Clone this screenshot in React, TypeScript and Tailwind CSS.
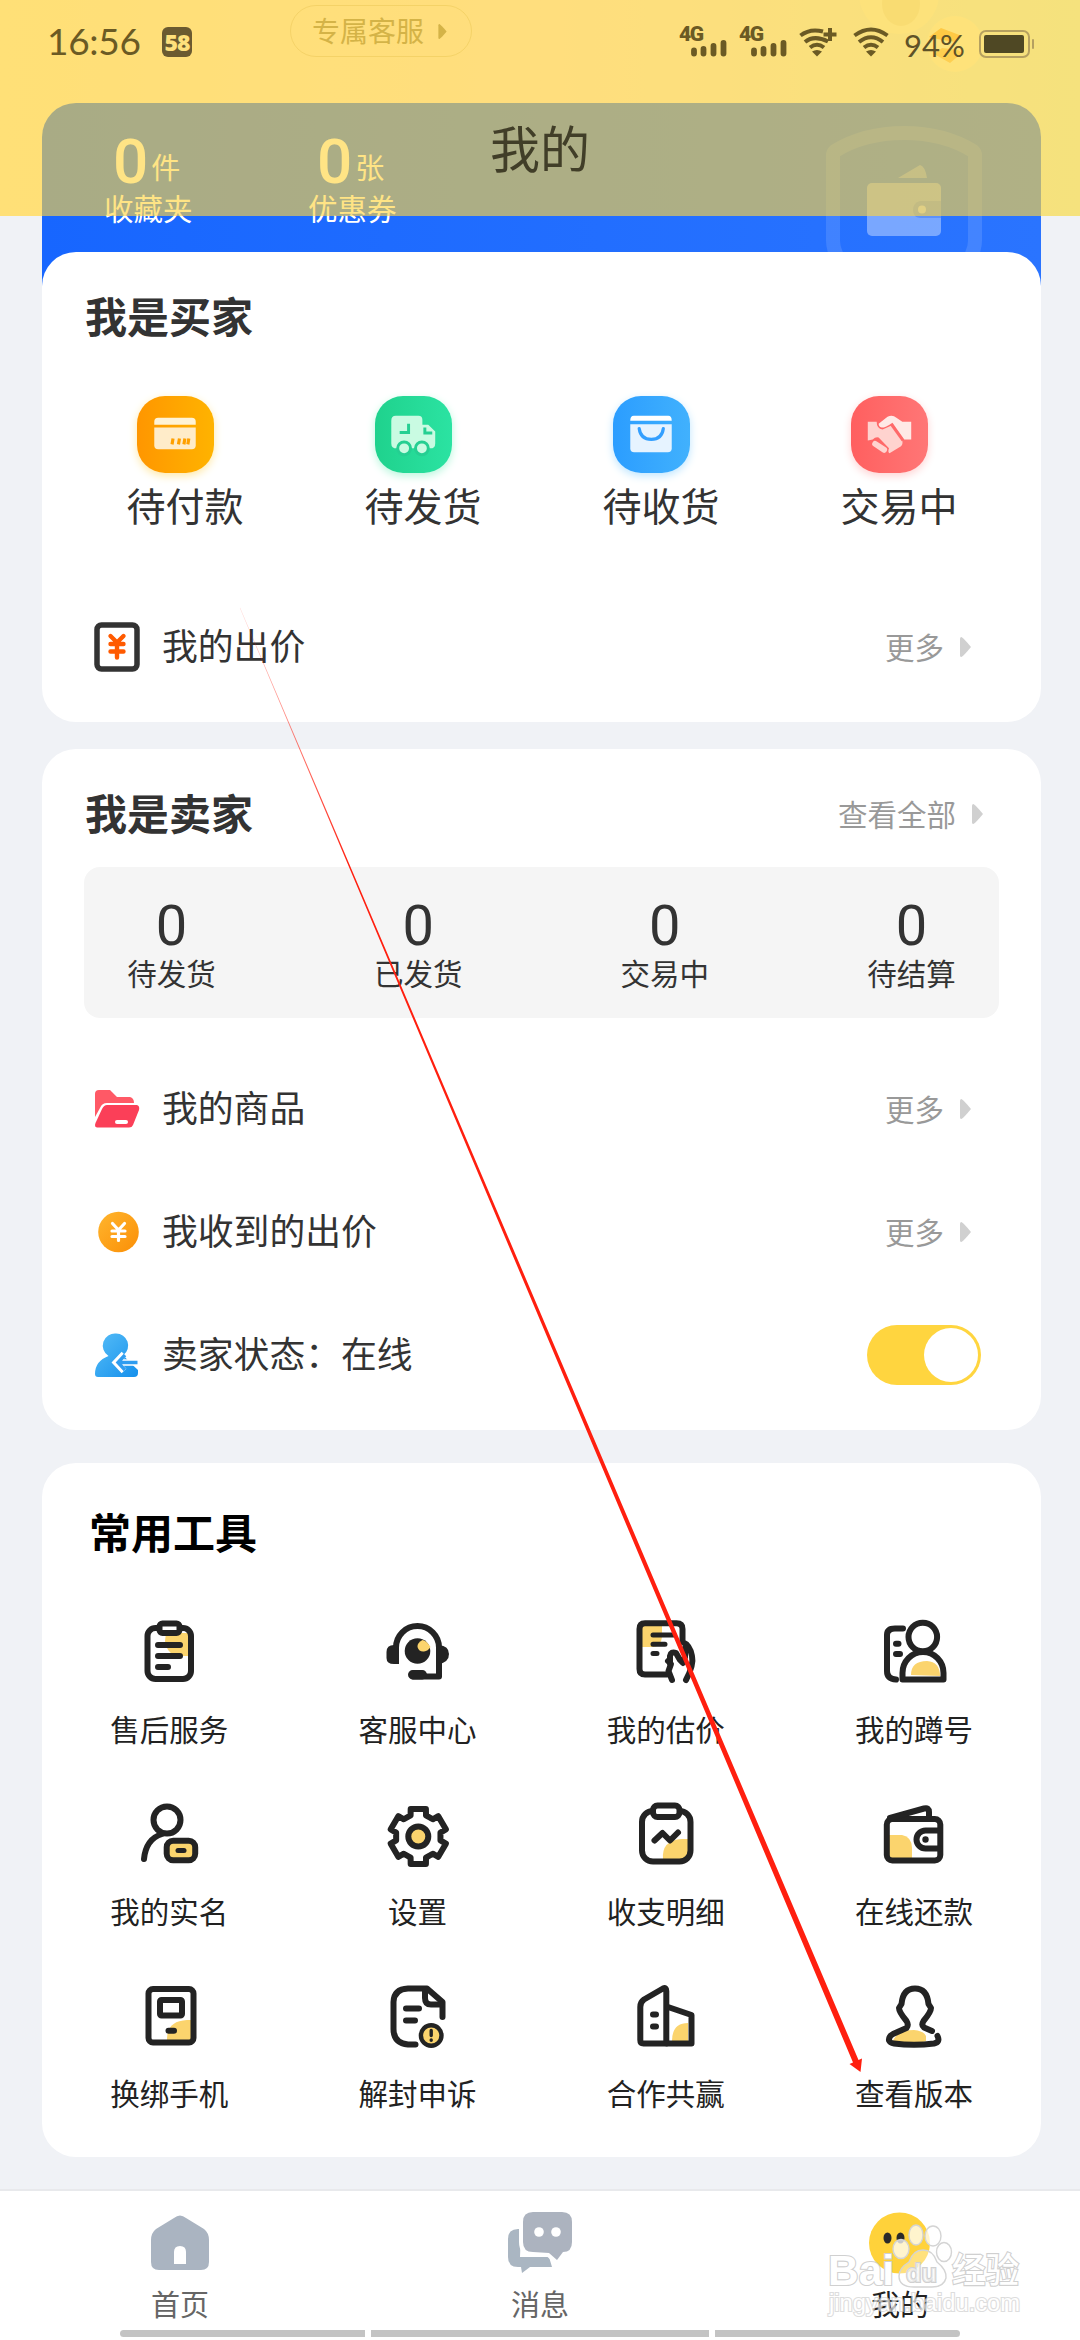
import type { ReactNode } from "react";

const INK = "#232323";
const SUN = "#fbd46d";

function Triangle({ className }: { className: string }) {
  return (
    <svg className={className} viewBox="0 0 11 20">
      <path d="M1.5 0Q0 0 0 1.5V18.500Q0 20 1.500 20Q4 18.500 11 10Q4 1.500 1.500 0Z" fill="currentColor" />
    </svg>
  );
}

/* ---------- tool icons, drawn in a 72 x 72 box ---------- */

function ToolIcon({ children }: { children: ReactNode }) {
  return (
    <svg className="h-[72px] w-[72px]" viewBox="0 0 72 72" fill="none" stroke={INK} strokeWidth="6" strokeLinecap="round" strokeLinejoin="round">
      {children}
    </svg>
  );
}

const gearPoints = Array.from({ length: 6 }, (_, i) =>
  [
    [-20, 22.5],
    [-15.5, 28.5],
    [15.5, 28.5],
    [20, 22.5],
  ]
    .map(([a, r]) => {
      const t = ((i * 60 + a - 90) * Math.PI) / 180;
      return `${(37.3 + r * Math.cos(t)).toFixed(2)},${(39.5 + r * Math.sin(t)).toFixed(2)}`;
    })
    .join(" "),
).join(" ");

const tools: { label: string; icon: ReactNode }[] = [
  {
    label: "售后服务",
    icon: (
      <>
        <path d="M33 18H58V41H42Q33 36 32 26Z" fill={SUN} stroke="none" />
        <rect x="14.500" y="13" width="43.500" height="51" rx="8" />
        <rect x="26.500" y="8.500" width="20" height="9.500" rx="3" fill="#fff" />
        <path d="M25 30H47M25 41H47M25 52H35" />
      </>
    ),
  },
  {
    label: "客服中心",
    icon: (
      <>
        <path d="M15 34V32.500A21.500 21.500 0 0 1 58 32.500V61.500H32" />
        <path d="M18 29V49H13Q5.500 49 5.500 43V37Q5.500 30 13 30Z" fill={INK} stroke="none" />
        <path d="M58 30Q68 31 68 39Q68 47 58 49Z" fill={INK} stroke="none" />
        <rect x="27" y="55" width="19" height="9.500" rx="4.700" fill={INK} stroke="none" />
        <circle cx="36.500" cy="36" r="12.800" fill={INK} stroke="none" />
        <path d="M41.500 25Q36 28 36.500 32Q38 37 43 36.500Q47 36 49.500 32Q46 26 41.500 25Z" fill={SUN} stroke="none" />
      </>
    ),
  },
  {
    label: "我的估价",
    icon: (
      <>
        <path d="M12 10H32V22Q31 32 22 32H12Z" fill={SUN} stroke="none" />
        <path d="M37 59.500H15Q9.500 59.500 9.500 54V14Q9.500 8.300 15 8.300H46.500Q52.500 8.300 52.500 14V27Q60 30 62 41Q64 50 56 65" />
        <path d="M23 20H44M23 29.200H35M23 38.500H27" strokeWidth="5" />
        <path d="M42 65L38.500 56L41 49L38 46M40 49V41Q41 36 46 38L50 45L53 48L55 42V33" />
      </>
    ),
  },
  {
    label: "我的蹲号",
    icon: (
      <>
        <path d="M33 60Q33 46 49 46Q62 47 62 61Z" fill={SUN} stroke="none" />
        <path d="M25 13.500H17Q9 13.500 9 20V56Q9 64 18 64.500" />
        <circle cx="44.800" cy="22" r="14.300" />
        <path d="M24.500 64.500V58A20.500 21 0 0 1 65.500 58V64.500Z" />
        <path d="M18 28.800H20.500M18 39H22" strokeWidth="6" />
      </>
    ),
  },
  {
    label: "我的实名",
    icon: (
      <>
        <circle cx="34" cy="23" r="13.500" />
        <path d="M11 62Q13 42 29 37" strokeWidth="6" />
        <rect x="33.700" y="43.700" width="28.500" height="19.500" rx="6.500" fill={SUN} />
        <path d="M45 53.500H51" strokeWidth="5" />
      </>
    ),
  },
  {
    label: "设置",
    icon: (
      <>
        <polygon points={gearPoints} />
        <circle cx="37.300" cy="39.500" r="10" fill={SUN} />
      </>
    ),
  },
  {
    label: "收支明细",
    icon: (
      <>
        <path d="M33 63Q31 43 52 42H58V63Z" fill={SUN} stroke="none" />
        <rect x="12" y="14" width="48.500" height="50.500" rx="11" />
        <rect x="23" y="8.500" width="26.500" height="11.500" rx="4.500" fill="#fff" />
        <path d="M24.500 43.500L32.500 36L40 43.500L48 35.500" />
      </>
    ),
  },
  {
    label: "在线还款",
    icon: (
      <>
        <path d="M10 38H24Q34 40 34 51V63H10Z" fill={SUN} stroke="none" />
        <rect x="8.800" y="22" width="53.500" height="41.500" rx="5.500" />
        <path d="M12 21L46 11.500Q51 10 51 15V20" />
        <path d="M62 33.500H47.500A9 9 0 0 0 47.500 51.500H62" />
        <circle cx="47.500" cy="42.500" r="3.200" fill={INK} stroke="none" />
      </>
    ),
  },
  {
    label: "换绑手机",
    icon: (
      <>
        <path d="M34 60Q34 42 54 41H60V62H34Z" fill={SUN} stroke="none" />
        <rect x="15.500" y="10" width="45" height="53.500" rx="4.500" />
        <rect x="27" y="21" width="22" height="15.500" rx="1.500" />
        <path d="M35.500 51.800H41" />
      </>
    ),
  },
  {
    label: "解封申诉",
    icon: (
      <>
        <path d="M34.500 65.500H27Q12.500 64 12.500 50V23Q13 10 27 9.500H46L61.500 23V38" />
        <path d="M44 11V19Q44 25.500 50 25.500H60" />
        <path d="M25 29.500H38M25 41.500H34" />
        <circle cx="50.200" cy="56.500" r="10.300" fill={SUN} strokeWidth="4.400" />
        <path d="M50.200 51.500V56.500M50.200 61V61.200" strokeWidth="3.400" />
      </>
    ),
  },
  {
    label: "合作共赢",
    icon: (
      <>
        <path d="M42 62Q42 44 58 44V62Z" fill={SUN} stroke="none" />
        <path d="M10.300 61V28Q10.300 23 14 20.500L33 9.500Q36.300 8 36.300 12V64.500H13.500Q10.300 64.500 10.300 61Z" />
        <path d="M38 28L61.500 36V64.500H37" />
        <path d="M23 35.500H26M23 47.500H26" strokeWidth="6" />
      </>
    ),
  },
  {
    label: "查看版本",
    icon: (
      <>
        <path d="M14 64Q18 51 36 51Q46 52 48 57V62Q34 68 14 64Z" fill={SUN} stroke="none" />
        <path d="M54 52L46 48.500Q43 46 45.500 42Q53 33 53 29L50.500 25Q49 9.500 37 9.500Q25 9.500 23.500 25L21 29Q21 33 28.500 42Q31 46 28.500 49L15 55Q10.500 57.500 11 61.500Q12 64 16 64.500Q36 67 56 64.500Q62.500 63 59.500 57" />
      </>
    ),
  },
];

/* ---------- order status icons, 78 x 78 ---------- */

const orderSteps: { label: string; tile: string; icon: ReactNode }[] = [
  {
    label: "待付款",
    tile: "bg-linear-to-r from-[#ff9600] to-[#ffb300] shadow-[0_3px_8px_#ffe9a8]",
    icon: (
      <>
        <path d="M21.500 22H55.500Q59.500 22 59.500 26V29H17.500V26Q17.500 22 21.500 22Z" fill="#fff3d6" />
        <path d="M17.500 32H59.500V50Q59.500 54 55.500 54H21.500Q17.500 54 17.500 50Z" fill="#ffecc9" />
        <path d="M36.500 43L35.500 49M43 43L42 49M48.500 43L47.500 49M52.500 43L51.500 49" stroke="#ffa000" strokeWidth="3.200" />
      </>
    ),
  },
  {
    label: "待发货",
    tile: "bg-linear-to-r from-[#1fd28d] to-[#2be3a2] shadow-[0_3px_8px_#b9f7dd]",
    icon: (
      <>
        <path d="M21 20H44Q48 20 48 24V29H54L61 36V48Q61 53 56 53H22Q16.500 53 16.500 48V25Q16.500 20 21 20Z" fill="#c9fbe2" />
        <path d="M34 28V37H25M50.500 32V37.500H58" stroke="#25cf92" strokeWidth="3" fill="none" />
        <circle cx="29.500" cy="53" r="6.500" fill="#c9fbe2" stroke="#25cf92" strokeWidth="3" />
        <circle cx="47.500" cy="53" r="6.500" fill="#c9fbe2" stroke="#25cf92" strokeWidth="3" />
      </>
    ),
  },
  {
    label: "待收货",
    tile: "bg-linear-to-r from-[#2b9dff] to-[#41b1fd] shadow-[0_3px_8px_#bfe6ff]",
    icon: (
      <>
        <path d="M21 20H56Q59.500 20 59.500 25H17.500Q17.500 20 21 20Z" fill="#fff" />
        <path d="M17.500 28.500H59.500V53Q59.500 57 55.500 57H21.500Q17.500 57 17.500 53Z" fill="#e6f3ff" />
        <path d="M26.500 33Q28 44 38.800 44Q49.500 44 51 33" stroke="#339fff" strokeWidth="3.200" fill="none" strokeLinecap="round" />
      </>
    ),
  },
  {
    label: "交易中",
    tile: "bg-linear-to-r from-[#ff5f5f] to-[#ff7676] shadow-[0_3px_8px_#ffd3d3]",
    icon: (
      <>
        <path d="M17 26H26Q26 33 32 34L41 30L52 45Q53 50 49 52L39 58Q37 57 38.500 53L28 42Q25 41 22 44L17 45Z" fill="#ffd3cf" />
        <path d="M28 28L37 21Q42 18.500 46 22L52 26H61V44H54L42 27Q35 32 31 32Q28 31 28 28Z" fill="#ffe9e6" />
        <path d="M41 29L52.500 45" stroke="#ff6a6a" strokeWidth="2.600" />
        <path d="M24.500 48.500L33.500 54.500" stroke="#ffd3cf" strokeWidth="6" strokeLinecap="round" />
      </>
    ),
  },
];

const sellerCounts = ["待发货", "已发货", "交易中", "待结算"];

function BidIcon() {
  return (
    <svg className="h-[50px] w-[46px]" viewBox="0 0 46 50" fill="none" strokeLinecap="round">
      <rect x="3" y="3" width="40" height="44" rx="4.500" stroke="#333" strokeWidth="5.500" />
      <path d="M16.500 14L23 20.500L29.500 14M16.500 22H29.500M16.500 29.500H29.500M23 21V35.500" stroke="#ff5a00" strokeWidth="4.400" />
    </svg>
  );
}

function FolderIcon() {
  return (
    <svg className="h-[50px] w-[46px]" viewBox="0 0 46 50">
      <path d="M5 6H16L23 13H36Q40 14 40 19H13Q8 19 6 24L1 33V10Q1 6 5 6Z" fill="#ff5966" />
      <path d="M13 21H43Q46 22 45 26L39 41Q38 43.500 35 43.500H3Q0 43 1.500 39L8 25Q10 21 13 21Z" fill="#fb3f58" />
      <path d="M23 38H32" stroke="#fff" strokeWidth="4" strokeLinecap="round" />
    </svg>
  );
}

function CoinIcon() {
  return (
    <svg className="h-[50px] w-[46px]" viewBox="0 0 46 50">
      <defs>
        <linearGradient id="coin" x1="0" y1="0" x2="1" y2="1">
          <stop offset="0" stopColor="#ffb52e" />
          <stop offset="1" stopColor="#fb8f06" />
        </linearGradient>
      </defs>
      <circle cx="24.500" cy="25" r="20.300" fill="url(#coin)" />
      <path d="M18.500 16.500L24.500 23L30.500 16.500M18 24H31M18 29.500H31M24.500 23V33.500" stroke="#fff" strokeWidth="3.200" strokeLinecap="round" fill="none" />
    </svg>
  );
}

function SellerIcon() {
  return (
    <svg className="h-[50px] w-[46px]" viewBox="0 0 46 50">
      <defs>
        <linearGradient id="seller" x1="0" y1="0" x2="1" y2="1">
          <stop offset="0" stopColor="#56bdf7" />
          <stop offset="1" stopColor="#1590ec" />
        </linearGradient>
      </defs>
      <path d="M22 3.500A12 12 0 0 1 29.500 25Q31 28 44 40V43Q44 47 40 47H4Q1 47 1 44Q1 31 14.500 26A12.200 12.200 0 0 1 22 3.500Z" fill="url(#seller)" />
      <path d="M30 24L22 32.500L30 41M23 32.500H46" stroke="#fff" strokeWidth="6.500" fill="none" />
      <path d="M31 25L24 32.500L31 40M25 32.500H43.500" stroke="#2f9df0" strokeWidth="3.400" fill="none" />
    </svg>
  );
}

function More({ label = "更多" }: { label?: string }) {
  return (
    <span className="flex items-center text-[29.500px] leading-[40px] text-[#999]">
      <span className="relative -top-px">{label}</span>
      <Triangle className="ml-4 h-5 w-[11px] text-[#d0d0d0]" />
    </span>
  );
}

function MenuRow({ icon, label, children }: { icon: ReactNode; label: string; children: ReactNode }) {
  return (
    <div className="flex h-[123px] items-center pl-[52px]">
      {icon}
      <span className="relative -top-[3px] ml-[22px] text-[35.800px] leading-[50px] text-[#333]">{label}</span>
      <div className="ml-auto">{children}</div>
    </div>
  );
}

/* ---------- status bar pieces ---------- */

function Signal({ className }: { className: string }) {
  return (
    <div className={`relative h-8 w-[48px] text-[#6b5a24] ${className}`}>
      <span className="block font-['Roboto',sans-serif] text-[21px] leading-[18px] font-black tracking-[-1.500px]">4G</span>
      <svg className="absolute top-0 left-0 h-8 w-[48px]" viewBox="0 0 48 32" stroke="currentColor" strokeWidth="5.800" strokeLinecap="round">
        <path d="M15 25.500V28.500M24.500 24V28.500M34.500 21V28.500M44.500 18V28.500" />
      </svg>
    </div>
  );
}

function Wifi({ plus, className }: { plus?: boolean; className: string }) {
  return (
    <svg className={`h-[30px] w-[38px] text-[#6b5a24] ${className}`} viewBox="0 0 38 30" fill="none" stroke="currentColor" strokeWidth="4">
      <path d={plus ? "M1.500 8.500Q11 1 24 4.500" : "M1.500 8.500Q18 -3.500 34.500 8.500"} />
      <path d={plus ? "M6 15Q15 7.500 29 14.500" : "M6 15Q18 5.500 30 15"} />
      <path d="M11 20.500Q18 15 25 20.500" />
      <path d="M13 24.500Q18 21.500 23 24.500L18 29.500Z" fill="currentColor" stroke="none" />
      {plus && <path d="M24.500 7.500H37.500M31 1V14" />}
    </svg>
  );
}

function StatusBar() {
  return (
    <div className="flex h-[57px] items-end pl-[47px] text-[#6b5a24]">
      <span className="w-[95px] translate-y-[3px] font-['Lato',sans-serif] text-[37px] leading-[38px] tracking-[-0.300px]">16:56</span>
      <span className="ml-5 flex h-[30px] w-[30px] items-center justify-center rounded-md bg-[#6b5a30] font-['Open_Sans',sans-serif] text-[23px] leading-none font-extrabold tracking-[-1px] text-[#ffe07c]">
        58
      </span>
      <Signal className="ml-[487px]" />
      <Signal className="ml-3" />
      <Wifi plus className="ml-3" />
      <Wifi className="ml-4" />
      <span className="ml-[13px] w-[64px] translate-y-[3px] font-['Lato',sans-serif] text-[31px] leading-[30px] text-[#5e5228]">94%</span>
      <span className="ml-[11px] flex h-[28px] w-[51px] translate-y-px items-center rounded-[7px] border-2 border-[#b5a060] px-[3px]">
        <span className="h-[18px] w-[40px] rounded-[2px] bg-[#4f4824]" />
      </span>
      <span className="mb-2 ml-0.5 h-2.5 w-[2px] rounded-full bg-[#b5a060]" />
    </div>
  );
}

function WalletStat({ unit, label }: { unit: string; label: string }) {
  return (
    <div className="flex w-[204px] flex-col text-white">
      <div className="flex h-[52px] items-end pl-[9px]">
        <span className="relative top-[6px] font-['Roboto',sans-serif] text-[62px] leading-[58px] font-medium">0</span>
        <span className="relative top-[2px] ml-[3px] text-[29px] leading-[42px]">{unit}</span>
      </div>
      <span className="text-[29.500px] leading-[44px]">{label}</span>
    </div>
  );
}

function ShieldWallet() {
  return (
    <svg className="h-[149px] w-[160px]" viewBox="0 0 160 149" fill="none">
      <path d="M14 155Q9 146 9 138V52Q9 50 11 48Q40 30 80 30Q120 30 149 48Q151 50 151 52V138Q151 146 146 155" stroke="#fff" strokeOpacity="0.120" strokeWidth="14" />
      <path d="M74 75L96 62Q101 63 103 75Z" fill="#fff" fillOpacity="0.300" />
      <rect x="43" y="80" width="74" height="53" rx="5" fill="#fff" fillOpacity="0.380" />
      <path d="M117 98H96Q89 100 89 107Q89 114 96 115H117Z" fill="#3f7cf5" fillOpacity="0.500" />
      <circle cx="98" cy="106.500" r="4" fill="#fff" fillOpacity="0.500" />
    </svg>
  );
}

function NavItem({ icon, label, color }: { icon: ReactNode; label: string; color: string }) {
  return (
    <div className="flex w-[360px] flex-col items-center pt-[19px]">
      {icon}
      <span className={`mt-[5px] text-[29px] leading-[40px] ${color}`}>{label}</span>
    </div>
  );
}

function Watermark() {
  return (
    <div className="absolute top-[2218px] left-[826px] h-[104px] w-[200px]">
      <svg className="h-[104px] w-[200px] overflow-visible" viewBox="0 0 200 104">
        <g fill="#fff" fillOpacity="0.750" stroke="#d4d4d4" strokeWidth="1.400">
          <ellipse cx="90" cy="17" rx="7" ry="10" />
          <ellipse cx="107" cy="18" rx="8" ry="10" />
          <ellipse cx="75" cy="31" rx="8" ry="9.500" />
          <ellipse cx="118" cy="34" rx="7.500" ry="9.500" />
          <path d="M97 32Q107 32 111 44Q121 52 120 60Q118 69 106 69H88Q73 69 73 58Q73 50 83 44Q87 32 97 32Z" fillOpacity="0.350" />
        </g>
        <g stroke="#d0d0d0" strokeWidth="2.200" fill="#fff" paintOrder="stroke" style={{ fontFamily: "'Liberation Sans','Noto Sans CJK SC',sans-serif" }}>
          <text x="2" y="67" fontSize="43" fontWeight="700" textLength="66" lengthAdjust="spacingAndGlyphs">Bai</text>
          <text x="80" y="64" fontSize="26" fontWeight="700" textLength="31" lengthAdjust="spacingAndGlyphs" fillOpacity="0.500">du</text>
          <text x="126" y="65" fontSize="35" fontWeight="500" textLength="67" lengthAdjust="spacingAndGlyphs">经验</text>
          <text x="3" y="93" fontSize="23" textLength="191" lengthAdjust="spacingAndGlyphs" opacity="0.700">jingyan.baidu.com</text>
        </g>
      </svg>
    </div>
  );
}

export default function App() {
  return (
    <div className="relative flex h-[2340px] w-[1080px] flex-col overflow-hidden bg-[#f0f2f6] font-['Noto_Sans_CJK_SC',sans-serif]">
      <div className="h-[252px] shrink-0 bg-linear-to-r from-[#fff3d8] via-[#ffeeea] via-50% to-[#e4f8ea] bg-[length:100%_216px] bg-no-repeat">
        <div className="relative flex h-[103px] justify-start pt-[5px] pl-[290px]">
          <div className="flex h-[52px] w-[182px] items-center rounded-full border border-[#e2cfae] pl-[21px] text-[28px] leading-[40px] text-[#8a7a58]">
            <span className="relative -top-px">专属客服</span>
            <Triangle className="ml-[14px] h-[15px] w-[9px]" />
          </div>
          <svg className="absolute top-0 right-[90px] h-[80px] w-[140px]" viewBox="0 0 140 80" fill="none">
            <circle cx="49" cy="-6" r="40" fill="#fffbe0" fillOpacity="0.700" />
            <ellipse cx="51" cy="4" rx="19" ry="22" fill="#efe9cc" />
            <circle cx="105" cy="44" r="28" fill="#fffbe0" fillOpacity="0.800" />
            <path d="M79 37L91 28L112 36L106 42L92 40Z" fill="#ff9000" fillOpacity="0.650" />
            <path d="M112 53L100 63L84 54L92 48L108 50Z" fill="#ff9000" fillOpacity="0.500" />
          </svg>
        </div>
        <div className="flex h-[189px] px-[42px]">
          <div className="flex h-[189px] w-[999px] shrink-0 rounded-t-[34px] bg-linear-to-r from-[#1766ff] to-[#2a74ff]">
            <div className="flex pt-[30px] pl-[62px]">
              <WalletStat unit="件" label="收藏夹" />
              <WalletStat unit="张" label="优惠券" />
            </div>
            <div className="ml-auto pr-[57px]">
              <ShieldWallet />
            </div>
          </div>
        </div>
      </div>

      <div className="relative flex h-[1937px] shrink-0 flex-col pl-[42px]">
        {/* buyer */}
        <section className="flex h-[470px] w-[999px] flex-col rounded-[34px] bg-white">
          <h2 className="h-[144px] shrink-0 pt-[34px] pl-[43px] text-[42px] leading-[58px] font-bold text-[#333]">我是买家</h2>
          <div className="flex pl-[24px]">
            {orderSteps.map((s) => (
              <div key={s.label} className="flex w-[238px] flex-col items-center">
                <div className={`mr-[19px] h-[77px] w-[77px] rounded-[28px] ${s.tile}`}>
                  <svg className="h-[77px] w-[77px]" viewBox="0 0 78 78">
                    {s.icon}
                  </svg>
                </div>
                <span className="mt-[4px] text-[39px] leading-[54px] text-[#333]">{s.label}</span>
              </div>
            ))}
          </div>
          <div className="mt-[54px] pr-[70px]">
            <MenuRow icon={<BidIcon />} label="我的出价">
              <More />
            </MenuRow>
          </div>
        </section>

        {/* seller */}
        <section className="mt-[27px] flex h-[681px] w-[999px] flex-col rounded-[34px] bg-white">
          <div className="flex h-[118px] items-center justify-between pt-[7px] pr-[58px] pl-[43px]">
            <h2 className="text-[42px] leading-[58px] font-bold text-[#333]">我是卖家</h2>
            <div className="pt-1">
              <More label="查看全部" />
            </div>
          </div>
          <div className="mx-[42px] flex h-[151px] justify-between rounded-2xl bg-[#f5f5f5] px-[43px] pt-[29px]">
            {sellerCounts.map((c) => (
              <div key={c} className="flex w-[89px] flex-col items-center text-[#333]">
                <span className="font-['Roboto',sans-serif] text-[56px] leading-[60px]">0</span>
                <span className="-mt-0.5 text-[29.500px] leading-[36px]">{c}</span>
              </div>
            ))}
          </div>
          <div className="mt-[29px] pr-[70px]">
            <MenuRow icon={<FolderIcon />} label="我的商品">
              <More />
            </MenuRow>
            <MenuRow icon={<CoinIcon />} label="我收到的出价">
              <More />
            </MenuRow>
            <MenuRow icon={<SellerIcon />} label="卖家状态：在线">
              <div className="-mr-[10px] flex h-[60px] w-[114px] items-center justify-end rounded-full bg-[#ffd53f] pr-[3px]">
                <div className="h-[54px] w-[54px] rounded-full bg-white" />
              </div>
            </MenuRow>
          </div>
        </section>

        {/* tools */}
        <section className="mt-[33px] flex h-[694px] w-[999px] flex-col rounded-[34px] bg-white">
          <h2 className="h-[152px] shrink-0 pt-[39px] pl-[47px] text-[42px] leading-[58px] font-bold text-black">常用工具</h2>
          <div className="grid grid-cols-[repeat(4,248.300px)] gap-y-[46px] pl-[3px]">
            {tools.map((t) => (
              <div key={t.label} className="flex h-[136px] flex-col items-center">
                <ToolIcon>{t.icon}</ToolIcon>
                <span className="mt-5 text-[29.500px] leading-[42px] text-[#222]">{t.label}</span>
              </div>
            ))}
          </div>
        </section>
      </div>

      {/* bottom navigation */}
      <nav className="relative flex h-[151px] shrink-0 border-t-2 border-[#e8e9ec] bg-white">
        <NavItem
          label="首页"
          color="text-[#666]"
          icon={
            <svg className="h-[68px] w-[68px]" viewBox="0 0 68 68">
              <path d="M28 8Q34 3 40 8L58 19Q63 23 63 30V52Q63 60 55 60H13Q5 60 5 52V30Q5 23 10 19Z" fill="#aab4c1" />
              <path d="M28 54V42Q28 36 34 36Q40 36 40 42V54Z" fill="#fff" />
            </svg>
          }
        />
        <NavItem
          label="消息"
          color="text-[#666]"
          icon={
            <svg className="h-[68px] w-[68px]" viewBox="0 0 68 68">
              <path d="M15 19H12Q2 19 2 29V47Q2 57 12 57H15L16 63L24 57H46L43 47H14Z" fill="#aab6c2" />
              <path d="M27 2H56Q66 2 66 12V32Q66 42 57 42L51 50L43 43L27 42Q17 42 17 32V12Q17 2 27 2Z" fill="#acb3bf" stroke="#fff" strokeWidth="8" paintOrder="stroke" />
              <circle cx="33" cy="22" r="4.800" fill="#fff" />
              <circle cx="50" cy="22" r="4.800" fill="#fff" />
            </svg>
          }
        />
        <NavItem
          label="我的"
          color="text-[#222]"
          icon={
            <svg className="h-[68px] w-[68px]" viewBox="0 0 68 68">
              <circle cx="33.500" cy="33" r="30.500" fill="#ffd23a" />
              <ellipse cx="21.500" cy="28" rx="4" ry="5.500" fill="#2a2a2a" />
              <ellipse cx="34.500" cy="28" rx="4" ry="5.500" fill="#2a2a2a" />
            </svg>
          }
        />
        <div className="absolute bottom-[3px] left-[120px] flex h-[7px] w-[840px] gap-1.5 overflow-hidden rounded-full">
          <span className="w-[245px] bg-[#c3c3c3]" />
          <span className="flex-1 bg-[#c3c3c3]" />
          <span className="w-[245px] bg-[#c3c3c3]" />
        </div>
      </nav>

      {/* translucent title bar */}
      <header className="absolute top-0 left-0 flex h-[216px] w-[1080px] flex-col bg-[#ffd53e]/63">
        <StatusBar />
        <h1 className="mt-[56px] text-center text-[50px] leading-[66px] text-[#413e28]">我的</h1>
      </header>

      <Watermark />

      {/* pointer to the version entry */}
      <svg className="pointer-events-none absolute top-0 left-0 h-[2340px] w-[1080px]" viewBox="0 0 1080 2340">
        <defs>
          <linearGradient id="pointer" gradientUnits="userSpaceOnUse" x1="240" y1="608" x2="350" y2="868">
            <stop offset="0" stopColor="#ff1f0f" stopOpacity="0.150" />
            <stop offset="1" stopColor="#ff1f0f" />
          </linearGradient>
        </defs>
        <path d="M239.800 608L240.200 607.800L858.500 2060L862 2058.500L860.500 2072L849.500 2064L853 2062.500Z" fill="url(#pointer)" />
      </svg>
    </div>
  );
}
